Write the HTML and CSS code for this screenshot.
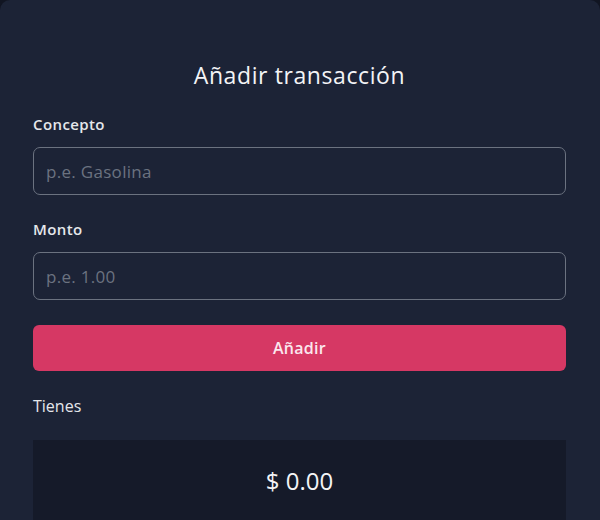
FILE: index.html
```html
<!DOCTYPE html>
<html lang="es">
<head>
<meta charset="utf-8">
<title>Añadir transacción</title>
<link rel="stylesheet" href="styles.css">
</head>
<body>
<main class="card">
  <h1 class="title">Añadir transacción</h1>
  <form class="form">
    <label class="label" for="concepto">Concepto</label>
    <input class="input" id="concepto" type="text" placeholder="p.e. Gasolina">
    <label class="label label-gap" for="monto">Monto</label>
    <input class="input" id="monto" type="text" placeholder="p.e. 1.00">
    <button class="btn" type="button">Añadir</button>
  </form>
  <p class="balance-label">Tienes</p>
  <div class="balance">$ 0.00</div>
</main>
</body>
</html>
```
FILE: styles.css
```css
* { box-sizing: border-box; }
html, body { margin: 0; padding: 0; }
body {
  background: #111522;
  width: 600px;
  height: 520px;
  overflow: hidden;
  font-family: "Open Sans", sans-serif;
}
.card {
  background: #1c2336;
  border-radius: 10px 10px 0 0;
  height: 520px;
  padding: 61px 34px 0 33px;
  display: flex;
  flex-direction: column;
}
.title {
  margin: 0;
  text-align: center;
  font-size: 23px;
  line-height: 28px;
  font-weight: 500;
  color: #f3f4f6;
  letter-spacing: 0.6px;
}
.form {
  display: flex;
  flex-direction: column;
  margin-top: 25px;
}
.label {
  font-size: 15px;
  line-height: 20px;
  font-weight: 600;
  color: #e5e7eb;
  letter-spacing: 0.4px;
  margin-bottom: 13px;
}
.label-gap { margin-top: 24px; }
.input {
  height: 48px;
  border: 1px solid #6b7280;
  border-radius: 7px;
  background: #1c2336;
  padding: 0 12px;
  font-family: "Open Sans", sans-serif;
  font-size: 17px;
  letter-spacing: 0.3px;
  color: #e5e7eb;
  outline: none;
}
.input::placeholder { color: #6b7280; }
.btn {
  margin-top: 25px;
  height: 46px;
  border: none;
  border-radius: 6px;
  background: #d63864;
  color: #fbe7ee;
  font-family: "Open Sans", sans-serif;
  font-size: 16px;
  font-weight: 600;
  letter-spacing: 0.3px;
}
.balance-label {
  margin: 25px 0 0;
  font-size: 16px;
  line-height: 20px;
  color: #e5e7eb;
}
.balance {
  margin-top: 24px;
  flex: 1;
  background: #151a29;
  display: flex;
  align-items: center;
  justify-content: center;
  font-size: 24px;
  color: #f3f4f6;
}
```
